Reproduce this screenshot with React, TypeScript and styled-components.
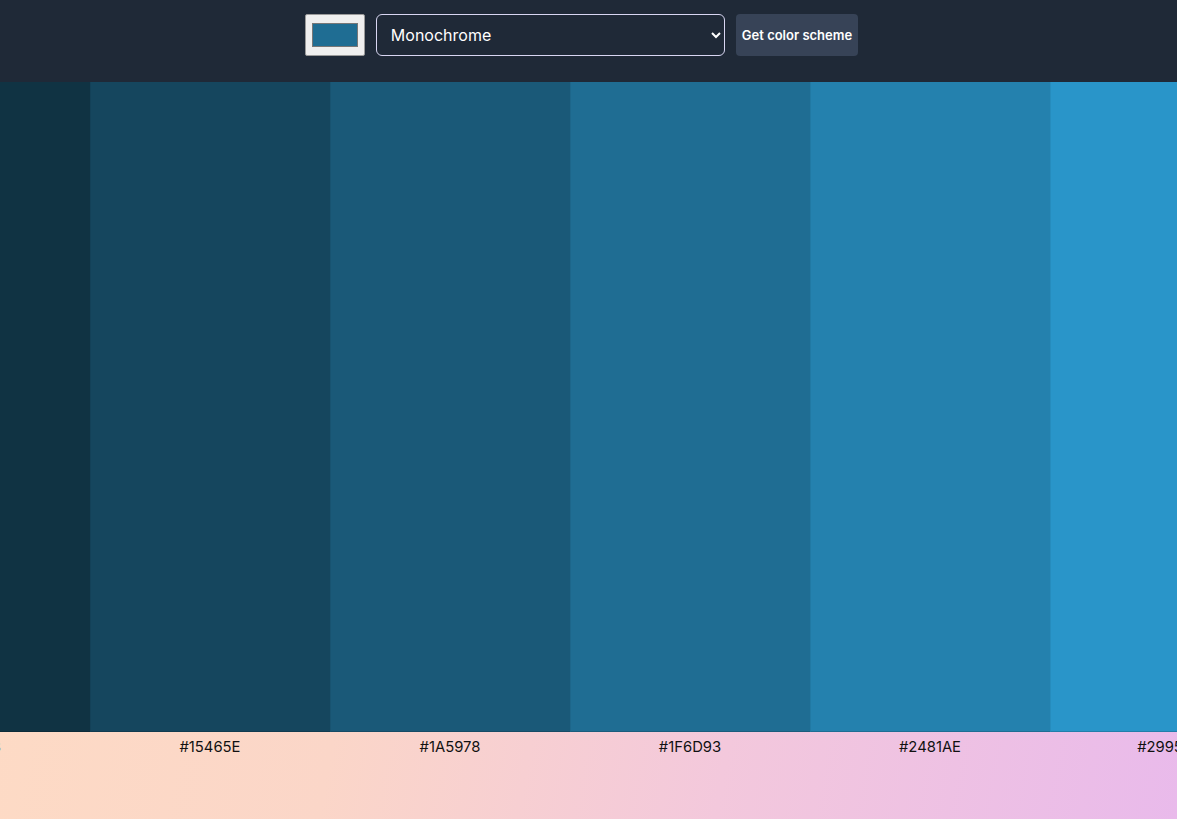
import React, { useState } from "react";
import styled, { createGlobalStyle } from "styled-components";

const Global = createGlobalStyle`
  html, body { margin: 0; padding: 0; }
  body {
    font-family: Inter, "Noto Sans", sans-serif;
    min-height: 819px;
    background: linear-gradient(100deg, #fedcc4 0%, #fbd6c8 35%, #f3c8dc 65%, #e9baeb 100%);
    overflow: hidden;
  }
`;

const Header = styled.header`
  height: 82px;
  background: #1f2937;
  display: flex;
  align-items: flex-start;
  justify-content: center;
  gap: 11px;
  padding: 14px 14px 0 0;
  box-sizing: border-box;
`;

const ColorInput = styled.input`
  width: 60px;
  height: 42px;
  margin: 0;
  padding: 4px 4px;
  box-sizing: border-box;
  background: #efefef;
  border: 1px solid #9a9a9a;
  border-radius: 2px;
  cursor: pointer;
`;

const Select = styled.select`
  width: 349px;
  height: 42px;
  box-sizing: border-box;
  background: #1f2937;
  color: #ffffff;
  border: 1px solid #d8d6f2;
  border-radius: 6px;
  padding: 0 10px;
  font-family: Inter, "Noto Sans", sans-serif;
  font-size: 16px;
  color-scheme: dark;
`;

const Button = styled.button`
  height: 42px;
  padding: 0 6px;
  background: #374357;
  color: #ffffff;
  border: none;
  border-radius: 4px;
  font-family: Inter, "Noto Sans", sans-serif;
  font-size: 13px;
  font-weight: 600;
  cursor: pointer;
`;

const Viewport = styled.main`
  width: 100%;
  overflow: hidden;
`;

const Row = styled.div`
  display: flex;
  margin-left: -150px;
  width: max-content;
`;

const Column = styled.div`
  width: 240px;
  display: flex;
  flex-direction: column;
`;

const Swatch = styled.div<{ $color: string }>`
  height: 650px;
  background: ${(p) => p.$color};
  border-left: 1px solid rgba(0, 0, 0, 0.06);
  border-bottom: 1px solid rgba(0, 0, 0, 0.15);
  box-sizing: border-box;
`;

const Label = styled.div`
  text-align: center;
  padding-top: 6px;
  font-size: 14.8px;
  color: #111111;
  font-family: Inter, "Noto Sans", sans-serif;
`;

const colors = ["#103343", "#15465E", "#1A5978", "#1F6D93", "#2481AE", "#2995C9"];

export default function App() {
  const [seed, setSeed] = useState("#1f6d93");
  return (
    <>
      <Global />
      <Header>
        <ColorInput type="color" value={seed} onChange={(e) => setSeed(e.target.value)} />
        <Select defaultValue="monochrome">
          <option value="monochrome">Monochrome</option>
          <option value="monochrome-dark">Monochrome-dark</option>
          <option value="analogic">Analogic</option>
          <option value="complement">Complement</option>
        </Select>
        <Button>Get color scheme</Button>
      </Header>
      <Viewport>
        <Row>
          {colors.map((c) => (
            <Column key={c}>
              <Swatch $color={c} />
              <Label>{c}</Label>
            </Column>
          ))}
        </Row>
      </Viewport>
    </>
  );
}
